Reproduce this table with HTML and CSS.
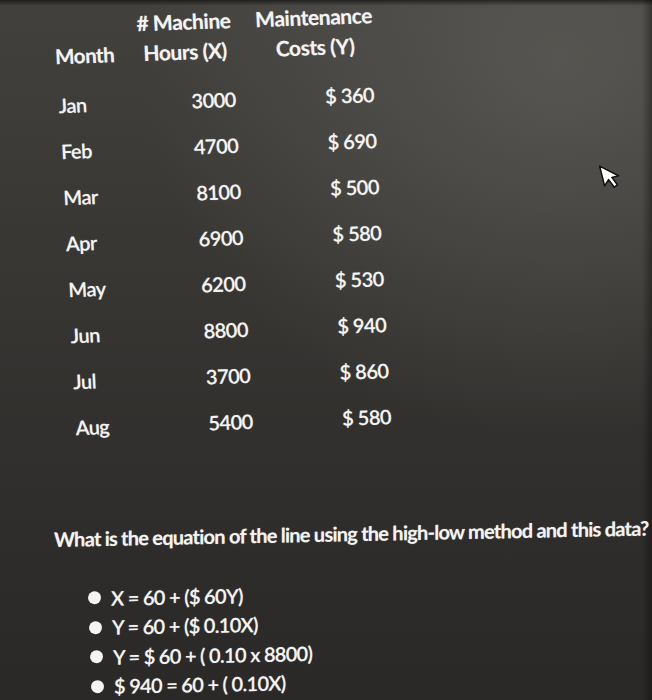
FILE: index.html
```html
<!DOCTYPE html>
<html lang="en">
<head>
<meta charset="utf-8">
<title>High-low method</title>
<link rel="stylesheet" href="styles.css">
</head>
<body>
<main class="page">
  <section class="table">
    <div class="head month-head">Month</div>
    <div class="head hours-head"># Machine<br>Hours (X)</div>
    <div class="head costs-head">Maintenance<br>Costs (Y)</div>

    <div class="cell month">Jan</div><div class="cell hours">3000</div><div class="cell cost">$ 360</div>
    <div class="cell month">Feb</div><div class="cell hours">4700</div><div class="cell cost">$ 690</div>
    <div class="cell month">Mar</div><div class="cell hours">8100</div><div class="cell cost">$ 500</div>
    <div class="cell month">Apr</div><div class="cell hours">6900</div><div class="cell cost">$ 580</div>
    <div class="cell month">May</div><div class="cell hours">6200</div><div class="cell cost">$ 530</div>
    <div class="cell month">Jun</div><div class="cell hours">8800</div><div class="cell cost">$ 940</div>
    <div class="cell month">Jul</div><div class="cell hours">3700</div><div class="cell cost">$ 860</div>
    <div class="cell month">Aug</div><div class="cell hours">5400</div><div class="cell cost">$ 580</div>
  </section>

  <section class="question">
    <p class="prompt">What is the equation of the line using the high-low method and this data?</p>
    <ul class="options">
      <li>X = 60 + ($ 60Y)</li>
      <li>Y = 60 + ($ 0.10X)</li>
      <li>Y = $ 60 + ( 0.10 x 8800)</li>
      <li>$ 940 = 60 + ( 0.10X)</li>
    </ul>
  </section>

  <div class="cursor">
    <svg width="24" height="30" viewBox="0 0 20 25">
      <path d="M2 2 L2 19 L6.5 14.8 L9.6 22 L12.6 20.7 L9.6 13.6 L15.4 13.6 Z" fill="#fff" stroke="#111" stroke-width="1.3" stroke-linejoin="round"/>
    </svg>
  </div>
</main>
</body>
</html>
```

FILE: styles.css
```css
* { box-sizing: border-box; }

html, body {
  margin: 0;
  padding: 0;
}

body {
  width: 652px;
  height: 700px;
  overflow: hidden;
  background: #353432;
  font-family: Lato, "Open Sans", "Liberation Sans", sans-serif;
  color: #f3f3f1;
}

.page {
  position: relative;
  width: 652px;
  height: 700px;
  overflow: hidden;
  background:
    linear-gradient(to bottom, rgba(0,0,0,0.55) 0px, rgba(0,0,0,0) 6px),
    linear-gradient(to left, rgba(0,0,0,0.35) 0px, rgba(0,0,0,0) 10px),
    radial-gradient(ellipse 420px 380px at 560px 60px, rgba(95,93,88,0.75), rgba(95,93,88,0) 100%),
    linear-gradient(to bottom, #42413e 0%, #383734 35%, #2f2e2c 70%, #2a2927 100%);
  display: flex;
  flex-direction: column;
}

.table {
  display: grid;
  grid-template-columns: 67px 110px 130px;
  column-gap: 10px;
  padding: 13px 0 0 50px;
  transform-origin: 0 0;
  transform: skew(3deg, -2deg);
  text-shadow: 0 0 1px rgba(255,255,255,0.45);
}

.head {
  font-weight: 700;
  font-size: 21px;
  line-height: 30px;
  letter-spacing: -0.45px;
  margin-bottom: 11px;
  white-space: nowrap;
}

.month-head {
  align-self: end;
  font-size: 20.5px;
  padding-left: 2px;
}

.hours-head,
.costs-head {
  text-align: center;
}

.cell {
  height: 46px;
  line-height: 46px;
  font-size: 20px;
  font-weight: 600;
  letter-spacing: -0.5px;
  white-space: nowrap;
}

.month {
  padding-left: 3px;
}

.hours {
  text-align: center;
  padding-left: 52px;
}

.cost {
  text-align: center;
  padding-left: 64px;
}

.question {
  margin-top: 76px;
  transform-origin: 0 0;
  transform: skewY(-1.1deg);
  text-shadow: 0 0 1px rgba(255,255,255,0.45);
}

.prompt {
  margin: 0;
  padding-left: 54px;
  font-size: 20px;
  font-weight: 700;
  line-height: 24px;
  letter-spacing: -0.76px;
  white-space: nowrap;
}

.options {
  list-style: none;
  margin: 33px 0 0;
  padding: 0 0 0 88px;
  display: flex;
  flex-direction: column;
}

.options li {
  display: flex;
  align-items: center;
  gap: 10px;
  height: 29.5px;
  font-size: 20px;
  font-weight: 600;
  letter-spacing: -0.7px;
  white-space: nowrap;
}

.options li::before {
  content: "";
  width: 13px;
  height: 13px;
  border-radius: 50%;
  background: #f4f4f2;
  flex: none;
}

.options li:nth-child(2) { padding-left: 1px; }
.options li:nth-child(3) { padding-left: 2px; }
.options li:nth-child(4) { padding-left: 3px; }

.cursor {
  position: absolute;
  left: 600px;
  top: 161px;
  transform: rotate(-14deg);
  line-height: 0;
}
```
